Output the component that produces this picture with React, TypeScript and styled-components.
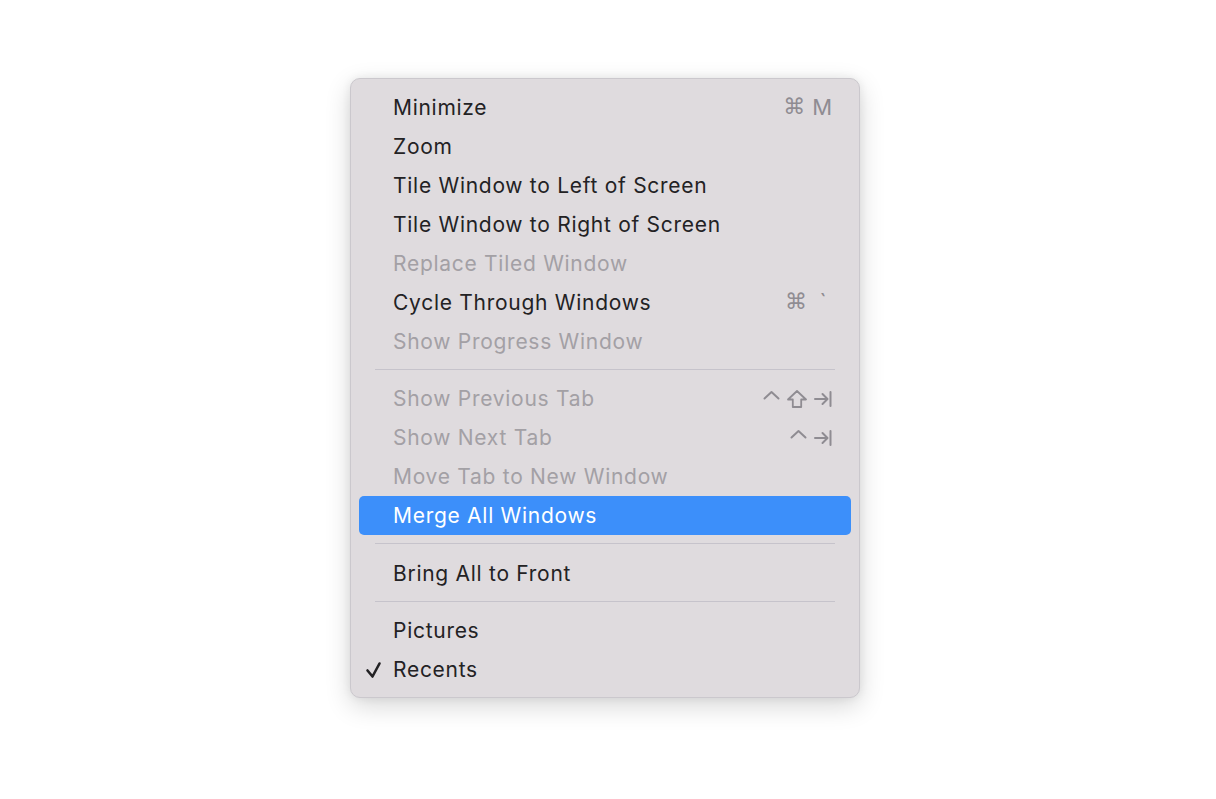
import React from 'react';
import styled, { createGlobalStyle } from 'styled-components';

const GlobalStyle = createGlobalStyle`
    html, body {
        margin: 0;
        background: #ffffff;
    }
    body {
        font-family: Inter, 'Noto Sans', sans-serif;
        -webkit-font-smoothing: antialiased;
    }
`;

type Key = 'cmd' | 'ctrl' | 'shift' | 'tab' | string;

interface Item {
    label: string;
    disabled?: boolean;
    selected?: boolean;
    checked?: boolean;
    keys?: Key[];
}

type Entry = Item | 'sep';

const entries: Entry[] = [
    { label: 'Minimize', keys: ['cmd', 'M'] },
    { label: 'Zoom' },
    { label: 'Tile Window to Left of Screen' },
    { label: 'Tile Window to Right of Screen' },
    { label: 'Replace Tiled Window', disabled: true },
    { label: 'Cycle Through Windows', keys: ['cmd', '`'] },
    { label: 'Show Progress Window', disabled: true },
    'sep',
    { label: 'Show Previous Tab', disabled: true, keys: ['ctrl', 'shift', 'tab'] },
    { label: 'Show Next Tab', disabled: true, keys: ['ctrl', 'tab'] },
    { label: 'Move Tab to New Window', disabled: true },
    { label: 'Merge All Windows', selected: true },
    'sep',
    { label: 'Bring All to Front' },
    'sep',
    { label: 'Pictures' },
    { label: 'Recents', checked: true },
];

const KeyGlyph = ({ k }: { k: Key }) => {
    if (k === 'ctrl') {
        return (
            <svg width="17" height="18" viewBox="0 0 17 18" fill="none">
                <path d="M1.5 8.5 L8.5 2 L15.5 8.5" stroke="currentColor" strokeWidth="2" strokeLinecap="round" strokeLinejoin="round" />
            </svg>
        );
    }
    if (k === 'shift') {
        return (
            <svg width="20" height="18" viewBox="0 0 20 18" fill="none">
                <path
                    d="M10 1 L19 9.5 H14.2 V17 H5.8 V9.5 H1 Z"
                    stroke="currentColor"
                    strokeWidth="1.8"
                    strokeLinejoin="round"
                />
            </svg>
        );
    }
    if (k === 'tab') {
        return (
            <svg width="18" height="18" viewBox="0 0 18 18" fill="none">
                <path
                    d="M1 9 H13 M8.5 4 L13.5 9 L8.5 14 M16.5 2 V16"
                    stroke="currentColor"
                    strokeWidth="2"
                    strokeLinecap="round"
                    strokeLinejoin="round"
                />
            </svg>
        );
    }
    if (k === 'cmd') return <Glyph symbol>⌘</Glyph>;
    return <Glyph>{k}</Glyph>;
};

const Check = () => (
    <svg width="18" height="18" viewBox="0 0 18 18" fill="none">
        <path d="M2.5 9.5 L7.5 15.5 L14.5 2.5" stroke="currentColor" strokeWidth="2.6" strokeLinecap="round" strokeLinejoin="round" />
    </svg>
);

const App = () => (
    <Page>
        <GlobalStyle />
        <Menu>
            {entries.map((e, i) =>
                e === 'sep' ? (
                    <Separator key={i} />
                ) : (
                    <Row key={i} disabled={e.disabled} selected={e.selected}>
                        <CheckSlot>{e.checked && <Check />}</CheckSlot>
                        <Label>{e.label}</Label>
                        {e.keys && (
                            <Keys>
                                {e.keys.map((k, j) => (
                                    <KeyGlyph key={j} k={k} />
                                ))}
                            </Keys>
                        )}
                    </Row>
                )
            )}
        </Menu>
    </Page>
);
export default App;

const Page = styled.div`
    width: 1216px;
    height: 799px;
    box-sizing: border-box;
    padding: 78px 0 0 350px;
    background: #ffffff;
`;

const Menu = styled.div`
    width: 510px;
    box-sizing: border-box;
    padding: 8.5px 8px 8px;
    background: #dfdbde;
    border: 1px solid #cbc8cd;
    border-radius: 10px;
    box-shadow: 0 8px 26px rgba(0, 0, 0, 0.16), 0 0 10px rgba(0, 0, 0, 0.07);
`;

const Row = styled.div<{ disabled?: boolean; selected?: boolean }>`
    display: flex;
    align-items: center;
    height: 39px;
    padding-right: 19px;
    border-radius: 5px;
    background: ${(p) => (p.selected ? '#3c8ffa' : 'transparent')};
    color: ${(p) => (p.selected ? '#ffffff' : p.disabled ? '#a3a0a5' : '#232224')};
`;

const CheckSlot = styled.div`
    width: 34px;
    flex: none;
    display: flex;
    align-items: center;
    padding-left: 6px;
    box-sizing: border-box;
    color: #232224;
`;

const Label = styled.div`
    flex: 1;
    font-size: 21px;
    letter-spacing: 0.72px;
    white-space: nowrap;
`;

const Keys = styled.div`
    display: flex;
    align-items: center;
    gap: 7px;
    color: #8f8c92;
`;

const Glyph = styled.span<{ symbol?: boolean }>`
    display: inline-block;
    min-width: 18px;
    text-align: center;
    font-family: ${(p) => (p.symbol ? "'DejaVu Sans', sans-serif" : 'Inter, sans-serif')};
    font-size: 22px;
    line-height: 1;
`;

const Separator = styled.div`
    height: 18.5px;
    box-sizing: border-box;
    padding: 8px 16px 0;

    &::after {
        content: '';
        display: block;
        height: 1px;
        background: #c6c3cb;
    }
`;
